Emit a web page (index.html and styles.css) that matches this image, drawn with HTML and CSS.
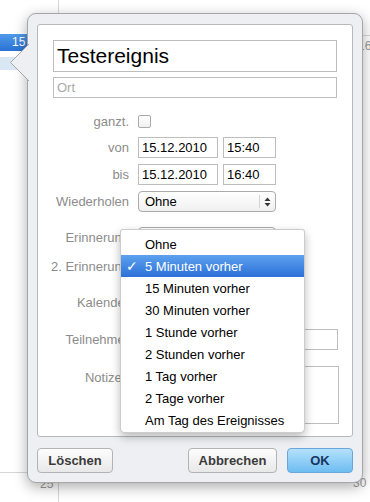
FILE: index.html
```html
<!DOCTYPE html>
<html lang="de">
<head>
<meta charset="utf-8">
<title>Testereignis</title>
<link rel="stylesheet" href="styles.css">
</head>
<body>
<div class="cal">
  <div class="line vl-a"></div>
  <div class="line hl-a"></div>
  <div class="line hl-b"></div>
  <div class="event">15</div>
  <div class="event-sel"></div>
  <div class="daynum dn-16">16</div>
  <div class="daynum dn-25">25</div>
  <div class="daynum dn-30">30</div>
</div>

<div class="popover">
  <svg class="arrow" width="19" height="37" viewBox="0 0 19 37">
    <path d="M19 0 L0.5 18.5 L19 37 Z" fill="#eeeff2"/>
    <path d="M19 0 L0.5 18.5 L19 37" fill="none" stroke="#a6a6a6" stroke-width="1"/>
  </svg>

  <div class="panel">
    <div class="title-field">Testereignis</div>
    <div class="ort-field">Ort</div>

    <div class="row r-ganzt"><span class="lbl">ganzt.</span><span class="cb"></span></div>
    <div class="row r-von"><span class="lbl">von</span><div class="fields"><div class="inp date">15.12.2010</div><div class="inp time">15:40</div></div></div>
    <div class="row r-bis"><span class="lbl">bis</span><div class="fields"><div class="inp date">15.12.2010</div><div class="inp time">16:40</div></div></div>
    <div class="row r-wdh"><span class="lbl">Wiederholen</span><div class="select"><span class="sel-val">Ohne</span><span class="sel-arrows"><svg width="7" height="10" viewBox="0 0 7 10"><path d="M3.5 0.5 L6.5 4 L0.5 4 Z M0.5 6 L6.5 6 L3.5 9.5 Z" fill="#333"/></svg></span></div></div>
    <div class="row r-er1"><span class="lbl">Erinnerung</span><div class="select"><span class="sel-val"></span><span class="sel-arrows"></span></div></div>
    <div class="row r-er2"><span class="lbl">2. Erinnerung</span><div class="select"><span class="sel-val"></span><span class="sel-arrows"></span></div></div>
    <div class="row r-kal"><span class="lbl">Kalender</span><div class="select"><span class="sel-val"></span><span class="sel-arrows"></span></div></div>
    <div class="row r-teil"><span class="lbl">Teilnehmer</span><div class="inp wide"></div></div>
    <div class="row r-not"><span class="lbl">Notizen</span><div class="inp area"></div></div>
  </div>

  <div class="footer">
    <div class="btn b-del">Löschen</div>
    <div class="btn-group">
      <div class="btn b-cancel">Abbrechen</div>
      <div class="btn b-ok">OK</div>
    </div>
  </div>

  <div class="menu">
    <div class="mi">Ohne</div>
    <div class="mi sel"><span class="check">✓</span>5 Minuten vorher</div>
    <div class="mi">15 Minuten vorher</div>
    <div class="mi">30 Minuten vorher</div>
    <div class="mi">1 Stunde vorher</div>
    <div class="mi">2 Stunden vorher</div>
    <div class="mi">1 Tag vorher</div>
    <div class="mi">2 Tage vorher</div>
    <div class="mi">Am Tag des Ereignisses</div>
  </div>
</div>
</body>
</html>
```

FILE: styles.css
```css
* { box-sizing: border-box; }

body {
  margin: 0;
  width: 370px;
  height: 502px;
  position: relative;
  overflow: hidden;
  background: #fff;
  font-family: "Liberation Sans", Arial, sans-serif;
  font-size: 13px;
  color: #000;
}

/* background calendar canvas */
.cal { position: absolute; left: 0; top: 0; width: 370px; height: 502px; }
.line { position: absolute; background: #d6d6d6; }
.vl-a { left: 58px; top: 0; width: 1px; height: 502px; }
.hl-a { left: 0; top: 472px; width: 58px; height: 1px; }
.hl-b { left: 362px; top: 35px; width: 8px; height: 1px; }
.event {
  position: absolute;
  left: 0; top: 34px;
  width: 34px; height: 17px;
  padding-left: 12px;
  background: linear-gradient(#4f9ae9, #2a72d5);
  color: #fff;
  font-size: 12px;
  line-height: 17px;
}
.event-sel {
  position: absolute;
  left: 0; top: 57px;
  width: 34px; height: 13px;
  background: #d9e7f5;
}
.daynum {
  position: absolute;
  font-size: 12px;
  line-height: 14px;
  color: #9a9a9a;
}
.dn-16 { left: 358px; top: 39px; }
.dn-25 { left: 40px; top: 477px; }
.dn-30 { left: 353px; top: 476px; }

/* popover */
.popover {
  position: absolute;
  left: 27px; top: 13px;
  width: 336px; height: 470px;
  border: 1px solid #a6a6a6;
  border-radius: 9px;
  background: #eeeff2;
  padding: 10px 9px 9px 9px;
  box-shadow: 0 4px 14px rgba(0, 0, 0, 0.33);
}
.arrow {
  position: absolute;
  left: -18px; top: 30px;
  display: block;
}

.panel {
  background: #fff;
  border: 1px solid #b9b9b9;
  border-radius: 3px;
  padding: 15px 15px 12px 0;
  display: flex;
  flex-direction: column;
}

.title-field {
  margin-left: 15px;
  height: 32px;
  border: 1px solid #bdbdbd;
  padding-left: 3px;
  font-size: 21px;
  line-height: 30px;
}
.ort-field {
  margin: 5px 0 0 15px;
  height: 21px;
  border: 1px solid #bdbdbd;
  padding-left: 3px;
  line-height: 19px;
  color: #a9a9a9;
}

.row {
  display: grid;
  grid-template-columns: 91px 1fr;
  column-gap: 9px;
  align-items: center;
  height: 21px;
}
.r-ganzt { margin-top: 13px; }
.r-von { margin-top: 5px; }
.r-bis { margin-top: 6px; }
.r-wdh { margin-top: 6px; }
.r-er1 { margin-top: 15px; }
.r-er2 { margin-top: 8px; }
.r-kal { margin-top: 15px; }
.r-teil { margin-top: 16px; }
.r-not { margin-top: 16px; height: 58px; align-items: start; }
.r-not .lbl { padding-top: 4px; }

.lbl {
  text-align: right;
  color: #8c8c8c;
  line-height: 16px;
  white-space: nowrap;
}

.cb {
  width: 13px; height: 13px;
  border: 1px solid #ababab;
  border-radius: 2px;
  background: linear-gradient(#fff, #f0f0f0);
}

.fields { display: flex; gap: 5px; }
.inp {
  height: 21px;
  border: 1px solid #bdbdbd;
  padding-left: 3px;
  line-height: 19px;
  background: #fff;
}
.date { width: 80px; }
.time { width: 53px; }
.wide { width: 200px; }
.area { width: 201px; height: 58px; }

.select {
  width: 138px;
  height: 21px;
  border: 1px solid #ababab;
  border-radius: 4px;
  background: linear-gradient(#ffffff, #f0f0f0);
  display: flex;
  align-items: center;
  padding-left: 6px;
}
.sel-val { flex: 1; line-height: 16px; }
.sel-arrows {
  width: 16px;
  height: 13px;
  border-left: 1px solid #d4d4d4;
  display: flex;
  align-items: center;
  justify-content: center;
}
.sel-arrows svg { display: block; }

/* footer buttons */
.footer {
  margin-top: 11px;
  display: flex;
  justify-content: space-between;
}
.btn-group { display: flex; gap: 10px; }
.btn {
  height: 25px;
  border: 1px solid #b3b3b3;
  border-radius: 4px;
  background: linear-gradient(#fdfdfd, #e8e8e8);
  font-weight: bold;
  color: #3b3b3b;
  display: flex;
  align-items: center;
  justify-content: center;
}
.b-del { width: 76px; }
.b-cancel { width: 89px; }
.b-ok {
  width: 66px;
  border-color: #68a6db;
  background: linear-gradient(#b5e1fb, #6dbdf2);
  color: #17365f;
}

/* dropdown menu (overlay) */
.menu {
  position: absolute;
  left: 92px; top: 215px;
  width: 185px; height: 204px;
  background: #fff;
  border: 1px solid rgba(0, 0, 0, 0.2);
  border-radius: 3px 3px 5px 5px;
  box-shadow: 0 4px 10px rgba(0, 0, 0, 0.28);
  padding-top: 3px;
}
.mi {
  height: 22px;
  padding-left: 24px;
  display: flex;
  align-items: center;
  position: relative;
  white-space: nowrap;
}
.mi.sel {
  background: linear-gradient(#5da1ee, #2c70d9);
  color: #fff;
}
.check {
  position: absolute;
  left: 5px;
  top: 2px;
  font-family: "DejaVu Sans", sans-serif;
  font-size: 14px;
  line-height: 18px;
  font-weight: bold;
}
```
